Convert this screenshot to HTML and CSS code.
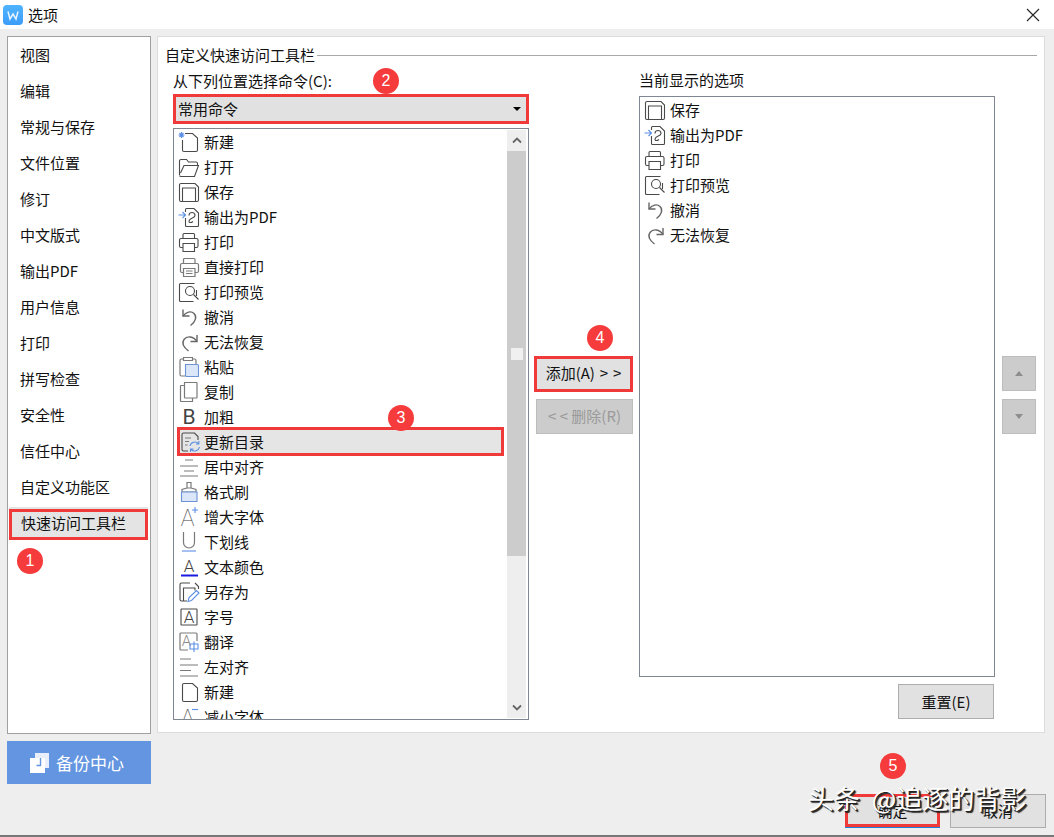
FILE: index.html
```html
<!DOCTYPE html>
<html lang="zh-CN">
<head>
<meta charset="utf-8">
<title>选项</title>
<link rel="stylesheet" href="styles.css">
</head>
<body>
<svg class="defs" aria-hidden="true">
  <symbol id="i-new" viewBox="0 0 22 22"><path d="M7 2.500H14.500L19.500 7V19A1.500 1.500 0 0 1 18 20.500H6A1.500 1.500 0 0 1 4.500 19V9" class="s"/><path d="M3.500 1V7M.5 4H6.500M1.500 2L5.500 6M5.500 2L1.500 6" class="b"/></symbol>
  <symbol id="i-blank" viewBox="0 0 22 22"><path d="M6 2.500H14.500L19.500 7V19A1.500 1.500 0 0 1 18 20.500H6A1.500 1.500 0 0 1 4.500 19V4A1.500 1.500 0 0 1 6 2.500Z" class="s"/></symbol>
  <symbol id="i-open" viewBox="0 0 22 22"><path d="M1.500 19V5A1.500 1.500 0 0 1 3 3.500H8.500L10.500 6H18A1.500 1.500 0 0 1 19.500 7.500V9.500" class="s"/><path d="M1.500 19.500Q1.800 20.500 3 20.500H16.500L20.500 9.500H6L2.500 17" class="s"/></symbol>
  <symbol id="i-save" viewBox="0 0 22 22"><path d="M3 2.500H17L20.500 6V19A1.500 1.500 0 0 1 19 20.500H3A1.500 1.500 0 0 1 1.500 19V4A1.500 1.500 0 0 1 3 2.500Z" class="s"/><path d="M4.500 20.500V7H17.500V20.500" class="s"/></symbol>
  <symbol id="i-pdf" viewBox="0 0 22 22"><path d="M7.500 6V3.500A1 1 0 0 1 8.500 2.500H16L20.500 7V19.500A1 1 0 0 1 19.500 20.500H8.500A1 1 0 0 1 7.500 19.500V12" class="s"/><path d="M11 9.500A3 3 0 0 1 17 9.500C17 12.500 11.500 11.500 11 15C10.800 17 13 17 15 15.500" class="s"/><path d="M.5 9H7.500M4.500 6L7.500 9L4.500 12" class="b"/></symbol>
  <symbol id="i-print" viewBox="0 0 22 22"><path d="M5 7.500V3.500A1 1 0 0 1 6 2.500H15.500A1 1 0 0 1 16.500 3.500V7.500" class="s"/><path d="M5 16.500H3A1.500 1.500 0 0 1 1.500 15V9A1.500 1.500 0 0 1 3 7.500H18.500A1.500 1.500 0 0 1 20 9V15A1.500 1.500 0 0 1 18.500 16.500H16.500" class="s"/><path d="M5 12.500H16.500V20.500H5Z" class="s"/></symbol>
  <symbol id="i-dprint" viewBox="0 0 22 22"><path d="M5.500 7.500V3.500A1 1 0 0 1 6.500 2.500H16A1 1 0 0 1 17 3.500V7.500" class="g"/><path d="M5.500 16.500H4A1.500 1.500 0 0 1 2.500 15V9A1.500 1.500 0 0 1 4 7.500H19A1.500 1.500 0 0 1 20.500 9V15A1.500 1.500 0 0 1 19 16.500H17" class="g"/><path d="M5.500 12.500H17V20.500H5.500ZM8 15H14.500M8 17.500H14.500" class="g"/></symbol>
  <symbol id="i-preview" viewBox="0 0 22 22"><path d="M16.500 2.500H2.500A1 1 0 0 0 1.500 3.500V19.500A1 1 0 0 0 2.500 20.500H15.500M18.500 15V9" class="s"/><circle cx="12" cy="10" r="4.500" class="s"/><path d="M15.500 13.500L20.500 18.500" class="s"/></symbol>
  <symbol id="i-undo" viewBox="0 0 22 22"><path d="M5 3.500V10H11.500" class="g2"/><path d="M5 10C8 6 13 4.500 16 7.500C19 10.500 18 15.500 12.500 19.500" class="g2"/></symbol>
  <symbol id="i-redo" viewBox="0 0 22 22"><path d="M19 4V10.500H12.500" class="g2"/><path d="M19 10.500C15.500 5 9 4.500 6 8.500C3.500 12 6 16.500 10.500 20" class="g2"/></symbol>
  <symbol id="i-paste" viewBox="0 0 22 22"><path d="M5 3H3.500A1.500 1.500 0 0 0 2 4.500V18.500A1.500 1.500 0 0 0 3.500 20H7M15 3H16.500A1.500 1.500 0 0 1 18 4.500V8M5.500 1.500H14.500V4.500H5.500Z" class="g"/><path d="M7.500 8.500H19.500A1 1 0 0 1 20.500 9.500V20.500H8.500A1 1 0 0 1 7.500 19.500Z" class="f"/></symbol>
  <symbol id="i-copy" viewBox="0 0 22 22"><path d="M6.500 4.500H3A.5.5 0 0 0 2.500 5V20A.5.5 0 0 0 3 20.500H14.500V17" class="g"/><path d="M6.500 1.500H18.500A.5.5 0 0 1 19 2V16.500A.5.5 0 0 1 18.500 17H7A.5.5 0 0 1 6.500 16.500Z" class="g"/></symbol>
  <symbol id="i-toc" viewBox="0 0 22 22"><path d="M9 20H4.500A1.500 1.500 0 0 1 3 18.500V3.500A1.500 1.500 0 0 1 4.500 2H15.500L19 5.500V9" class="s"/><path d="M6 7H12M6 10.500H10M6 14H8.500" class="g"/><path d="M11 15A5 5 0 0 1 19.500 12.500M20.500 16A5 5 0 0 1 12 18.500M19.800 10V13H17M11.500 21V18H14.500" class="b"/></symbol>
  <symbol id="i-center" viewBox="0 0 22 22"><path d="M7 4H15M2 10H20M6 15H16M2 20H20" class="g"/></symbol>
  <symbol id="i-left" viewBox="0 0 22 22"><path d="M2 3H13M2 9H20M2 14.500H13M2 20H20" class="g"/></symbol>
  <symbol id="i-brush" viewBox="0 0 22 22"><path d="M9 1.500H13V7H9ZM9 7L4 8.500V11H18V8.500L13 7" class="g"/><path d="M3.500 11H19V20.500H3.500Z" class="f"/></symbol>
  <symbol id="i-aplus" viewBox="0 0 22 22"><path d="M17 1V7M14 4H20" class="b"/></symbol>
  <symbol id="i-aminus" viewBox="0 0 22 22"><path d="M14 3.500H20" class="b"/></symbol>
  <symbol id="i-under" viewBox="0 0 22 22"><path d="M5.500 1V11.500A5.500 5.500 0 0 0 16.500 11.500V1" class="g"/><path d="M4 20H18" class="b"/></symbol>
  <symbol id="i-color" viewBox="0 0 22 22"><path d="M3 19.500H20" class="line"/></symbol>
  <symbol id="i-saveas" viewBox="0 0 22 22"><path d="M12 2H3.500A1.500 1.500 0 0 0 2 3.500V18.500A1.500 1.500 0 0 0 3.500 20H9M5.500 20V7H17V9.500M17 2L20.500 5.500V8" class="s"/><path d="M10 20.500L11 16.500L18.500 9.500L21 12L13.500 19.500Z" class="b"/></symbol>
  <symbol id="i-size" viewBox="0 0 22 22"><path d="M3.500 3A1 1 0 0 0 3 3.500V18.500A1 1 0 0 0 3.500 19H18.500A1 1 0 0 0 19 18.500V3.500A1 1 0 0 0 18.500 3Z" class="s"/></symbol>
  <symbol id="i-trans" viewBox="0 0 22 22"><path d="M10 19H3A1 1 0 0 1 2 18V3A1 1 0 0 1 3 2H18A1 1 0 0 1 19 3V10" class="g"/><path d="M12 13H20V18H12ZM16 10.500V21" class="b"/></symbol>
</svg>

<header class="titlebar">
  <div class="app-logo"><svg viewBox="0 0 20 20" class="logo-svg"><path d="M5 6.500L7 14L10 9L13 14L15 6.500" class="logo-w"/></svg></div>
  <span class="title">选项</span>
  <svg class="close" viewBox="0 0 14 14"><path d="M1 1L13 13M13 1L1 13" class="x"/></svg>
</header>

<main class="content">
  <nav class="sidebar">
    <div class="nav-item">视图</div>
    <div class="nav-item">编辑</div>
    <div class="nav-item">常规与保存</div>
    <div class="nav-item">文件位置</div>
    <div class="nav-item">修订</div>
    <div class="nav-item">中文版式</div>
    <div class="nav-item">输出PDF</div>
    <div class="nav-item">用户信息</div>
    <div class="nav-item">打印</div>
    <div class="nav-item">拼写检查</div>
    <div class="nav-item">安全性</div>
    <div class="nav-item">信任中心</div>
    <div class="nav-item">自定义功能区</div>
    <div class="nav-item nav-active">快速访问工具栏</div>
  </nav>

  <section class="panel">
    <div class="legend"><span>自定义快速访问工具栏</span><i class="rule"></i></div>
    <div class="columns">
      <div class="col">
        <div class="label">从下列位置选择命令(C):</div>
        <div class="select"><span>常用命令</span><i class="caret"></i></div>
        <div class="listbox listbox-left">
          <div class="rows">
            <div class="row"><svg class="ic"><use href="#i-new"/></svg>新建</div>
            <div class="row"><svg class="ic"><use href="#i-open"/></svg>打开</div>
            <div class="row"><svg class="ic"><use href="#i-save"/></svg>保存</div>
            <div class="row"><svg class="ic"><use href="#i-pdf"/></svg>输出为PDF</div>
            <div class="row"><svg class="ic"><use href="#i-print"/></svg>打印</div>
            <div class="row"><svg class="ic"><use href="#i-dprint"/></svg>直接打印</div>
            <div class="row"><svg class="ic"><use href="#i-preview"/></svg>打印预览</div>
            <div class="row"><svg class="ic"><use href="#i-undo"/></svg>撤消</div>
            <div class="row"><svg class="ic"><use href="#i-redo"/></svg>无法恢复</div>
            <div class="row"><svg class="ic"><use href="#i-paste"/></svg>粘贴</div>
            <div class="row"><svg class="ic"><use href="#i-copy"/></svg>复制</div>
            <div class="row"><svg class="ic" viewBox="0 0 22 22"><text x="11" y="18" class="t tb">B</text></svg>加粗</div>
            <div class="row row-active"><svg class="ic"><use href="#i-toc"/></svg>更新目录</div>
            <div class="row"><svg class="ic"><use href="#i-center"/></svg>居中对齐</div>
            <div class="row"><svg class="ic"><use href="#i-brush"/></svg>格式刷</div>
            <div class="row"><svg class="ic" viewBox="0 0 22 22"><use href="#i-aplus"/><text x="9.500" y="20" class="t ta">A</text></svg>增大字体</div>
            <div class="row"><svg class="ic"><use href="#i-under"/></svg>下划线</div>
            <div class="row"><svg class="ic" viewBox="0 0 22 22"><use href="#i-color"/><text x="11" y="16" class="t tc">A</text></svg>文本颜色</div>
            <div class="row"><svg class="ic"><use href="#i-saveas"/></svg>另存为</div>
            <div class="row"><svg class="ic" viewBox="0 0 22 22"><use href="#i-size"/><text x="11" y="16.500" class="t tc">A</text></svg>字号</div>
            <div class="row"><svg class="ic" viewBox="0 0 22 22"><use href="#i-trans"/><text x="8.500" y="15" class="t tg">A</text></svg>翻译</div>
            <div class="row"><svg class="ic"><use href="#i-left"/></svg>左对齐</div>
            <div class="row"><svg class="ic"><use href="#i-blank"/></svg>新建</div>
            <div class="row"><svg class="ic" viewBox="0 0 22 22"><use href="#i-aminus"/><text x="9.500" y="20" class="t ta">A</text></svg>减小字体</div>
          </div>
          <div class="scrollbar">
            <div class="sb-btn"><svg class="sb-arrow" viewBox="0 0 10 7"><path d="M1 5.500L5 1.500L9 5.500" class="chev"/></svg></div>
            <div class="sb-thumb"><i class="sb-grip"></i></div>
            <div class="sb-track"></div>
            <div class="sb-btn"><svg class="sb-arrow" viewBox="0 0 10 7"><path d="M1 1.500L5 5.500L9 1.500" class="chev"/></svg></div>
          </div>
        </div>
      </div>

      <div class="mid">
        <button class="btn btn-add">添加(A) &gt; &gt;</button>
        <button class="btn btn-off">&lt; &lt; 删除(R)</button>
      </div>

      <div class="col">
        <div class="label label-right">当前显示的选项</div>
        <div class="listbox listbox-right">
          <div class="rows">
            <div class="row"><svg class="ic"><use href="#i-save"/></svg>保存</div>
            <div class="row"><svg class="ic"><use href="#i-pdf"/></svg>输出为PDF</div>
            <div class="row"><svg class="ic"><use href="#i-print"/></svg>打印</div>
            <div class="row"><svg class="ic"><use href="#i-preview"/></svg>打印预览</div>
            <div class="row"><svg class="ic"><use href="#i-undo"/></svg>撤消</div>
            <div class="row"><svg class="ic"><use href="#i-redo"/></svg>无法恢复</div>
          </div>
        </div>
        <div class="reset-row"><button class="btn btn-reset">重置(E)</button></div>
      </div>

      <div class="updown">
        <button class="btn btn-off btn-sq"><i class="tri-up"></i></button>
        <button class="btn btn-off btn-sq"><i class="tri-down"></i></button>
      </div>
    </div>
  </section>
</main>

<footer class="footer">
  <button class="backup">
    <svg class="backup-ic" viewBox="0 0 19 20"><path d="M5 0H19V15H5Z" class="bk-a"/><path d="M0 5H15V20H0Z" class="bk-b"/><path d="M10.500 5V12.500H6.500" class="bk-c"/></svg>
    备份中心
  </button>
  <div class="actions">
    <button class="btn btn-ok">确定</button>
    <button class="btn btn-cancel">取消</button>
  </div>
</footer>

<span class="badge b1">1</span>
<span class="badge b2">2</span>
<span class="badge b3">3</span>
<span class="badge b4">4</span>
<span class="badge b5">5</span>
<div class="watermark">头条 @追逐的背影</div>
</body>
</html>
```
FILE: styles.css
```css
* { box-sizing: border-box; }
html, body { margin: 0; padding: 0; }
body {
  width: 1054px; height: 837px; overflow: hidden; position: relative;
  display: flex; flex-direction: column;
  background: #eeeeee; color: #111;
  font: 15px/20px "Noto Sans CJK SC", "Noto Sans", sans-serif;
  border-bottom: 2px solid #777;
}
.defs { position: absolute; width: 0; height: 0; }
.s { fill: none; stroke: #4a4a4a; stroke-width: 1.1; }
.g { fill: none; stroke: #7a7a7a; stroke-width: 1.2; }
.g2 { fill: none; stroke: #666; stroke-width: 1.4; }
.b { fill: none; stroke: #5b8fe6; stroke-width: 1.1; }
.f { fill: #dbe6f8; stroke: #6d93d6; stroke-width: 1.1; }
.line { fill: none; stroke: #1a1ae0; stroke-width: 2; }
.t { text-anchor: middle; font-family: Roboto, "Liberation Sans", sans-serif; font-weight: 300; fill: #444; }
.tb { font-size: 21px; font-weight: 400; }
.ta { font-size: 23px; font-weight: 100; }
.tc { font-size: 17px; }
.tg { font-size: 15px; fill: #8a8a8a; }

.titlebar { height: 29px; flex: none; background: #fff; display: flex; align-items: center; padding: 0 14px 0 3px; }
.app-logo { width: 20px; height: 20px; border-radius: 4px; background: linear-gradient(#4fb4ff, #3c9cfa); margin-right: 5px; }
.logo-svg { display: block; width: 20px; height: 20px; }
.logo-w { fill: none; stroke: #e8f4ff; stroke-width: 1.5; }
.title { font-size: 15px; }
.close { width: 14px; height: 14px; margin-left: auto; }
.x { stroke: #222; stroke-width: 1.1; fill: none; }

.content { flex: none; display: flex; gap: 6px; padding: 7px 9px 0 7px; height: 705px; }
.sidebar { width: 144px; height: 698px; flex: none; background: #fff; border: 1px solid #a0a0a0; padding: 0 2px 0 1px; }
.nav-item { height: 36px; line-height: 36px; padding-left: 11px; white-space: nowrap; }
.nav-active { height: 31px; line-height: 22px; margin-top: 4px; background: #e4e4e4; border: 3px solid #f03a3a; padding-left: 9px; box-shadow: 0 -2px 0 #e4e4e4; }

.panel { flex: 1; height: 697px; background: #fff; border: 1px solid #dcdcdc; padding: 8px 7px 0 7px; }
.legend { display: flex; align-items: center; height: 20px; }
.rule { flex: 1; height: 1px; background: #a8a8a8; margin-left: 2px; }
.columns { display: flex; gap: 6px; padding-left: 8px; margin-top: 6px; }
.col { width: 356px; flex: none; display: flex; flex-direction: column; }
.label { height: 20px; }
.label-right { height: 25px; line-height: 18px; }
.select {
  height: 30px; margin-top: 3px; background: #e1e1e1; border: 3px solid #f03a3a;
  display: flex; align-items: center; justify-content: space-between; padding: 0 5px 0 2px;
}
.caret { width: 0; height: 0; border: 4px solid transparent; border-top: 4px solid #000; border-bottom: 0; }
.listbox { border: 1px solid #7f8790; background: #fff; overflow: hidden; position: relative; }
.listbox-left { height: 592px; margin-top: 4px; display: flex; }
.listbox-right { height: 581px; }
.rows { flex: 1; min-width: 0; }
.row { height: 25px; display: flex; align-items: center; gap: 4px; padding-left: 4px; white-space: nowrap; }
.ic { width: 22px; height: 22px; flex: none; }
.row-active { background: #e5e5e5; outline: 3px solid #f03a3a; outline-offset: -1px; margin: 0 5px; padding-left: 0; gap: 3px; position: relative; }
.scrollbar { width: 21px; flex: none; display: flex; flex-direction: column; padding: 1px 2px 1px 0; }
.sb-btn { height: 21px; flex: none; background: #eeeeee; display: flex; align-items: center; justify-content: center; }
.sb-arrow { height: 7px; width: 10px; }
.chev { fill: none; stroke: #666; stroke-width: 1.8; }
.sb-thumb { height: 405px; background: #cccccc; display: flex; align-items: center; justify-content: center; flex: none; }
.sb-grip { width: 12px; height: 12px; background: #f0f0f0; }
.sb-track { flex: 1; background: #eeeeee; }

.btn { font: 15px/20px "Noto Sans CJK SC", "Noto Sans", sans-serif; background: #e1e1e1; border: 1px solid #adadad; color: #111; padding: 0; }
.mid { width: 98px; flex: none; display: flex; flex-direction: column; align-items: flex-end; gap: 7px; padding-top: 285px; }
.btn-add { width: 99px; height: 36px; border: 3px solid #f03a3a; margin-left: -1px; word-spacing: 1.5px; padding-bottom: 2px; }
.btn-off { background: #cccccc; border-color: #bdbdbd; color: #9a9a9a; }
.mid .btn-off { width: 97px; height: 35px; padding-bottom: 1px; }
.reset-row { display: flex; justify-content: flex-end; padding: 7px 1px 0 0; }
.btn-reset { width: 96px; height: 35px; }
.updown { width: 34px; flex: none; margin-left: 1px; display: flex; flex-direction: column; gap: 8px; padding-top: 285px; }
.btn-sq { width: 34px; height: 35px; display: flex; align-items: center; justify-content: center; }
.tri-up, .tri-down { width: 0; height: 0; border: 4px solid transparent; }
.tri-up { border-bottom: 5px solid #8d8d8d; border-top: 0; }
.tri-down { border-top: 5px solid #8d8d8d; border-bottom: 0; }

.footer { flex: 1; display: flex; justify-content: space-between; padding: 7px 8px 7px 7px; }
.backup {
  width: 144px; height: 43px; align-self: flex-start; background: #6495e0; color: #fff; border: 0;
  font: 17px/20px "Noto Sans CJK SC", sans-serif; display: flex; align-items: center; justify-content: center; gap: 7px; padding: 0 4px 0 0;
}
.backup-ic { width: 19px; height: 20px; }
.bk-a { fill: #e8eefa; }
.bk-b { fill: #fff; }
.bk-c { fill: none; stroke: #6495e0; stroke-width: 1.4; }
.actions { display: flex; gap: 10px; align-self: flex-end; }
.btn-ok { width: 95px; height: 33px; border: 3px solid #f03a3a; box-shadow: 0 1px 0 #1e7fd8; }
.btn-cancel { width: 96px; height: 34px; }

.badge {
  position: absolute; width: 26px; height: 26px; border-radius: 50%; background: #f53b3b; color: #fff;
  font: 16px/26px "Liberation Sans", sans-serif; text-align: center;
}
.b1 { left: 17px; top: 548px; }
.b2 { left: 373px; top: 68px; }
.b3 { left: 388px; top: 405px; }
.b4 { left: 587px; top: 325px; }
.b5 { left: 880px; top: 753px; }
.watermark {
  position: absolute; left: 808px; top: 781px; white-space: nowrap; color: #fff;
  font: 26px/34px "Noto Sans CJK SC", sans-serif; word-spacing: 6px;
  text-shadow: 1px 1px 0 #222, 2px 2px 1px #222;
}
```
